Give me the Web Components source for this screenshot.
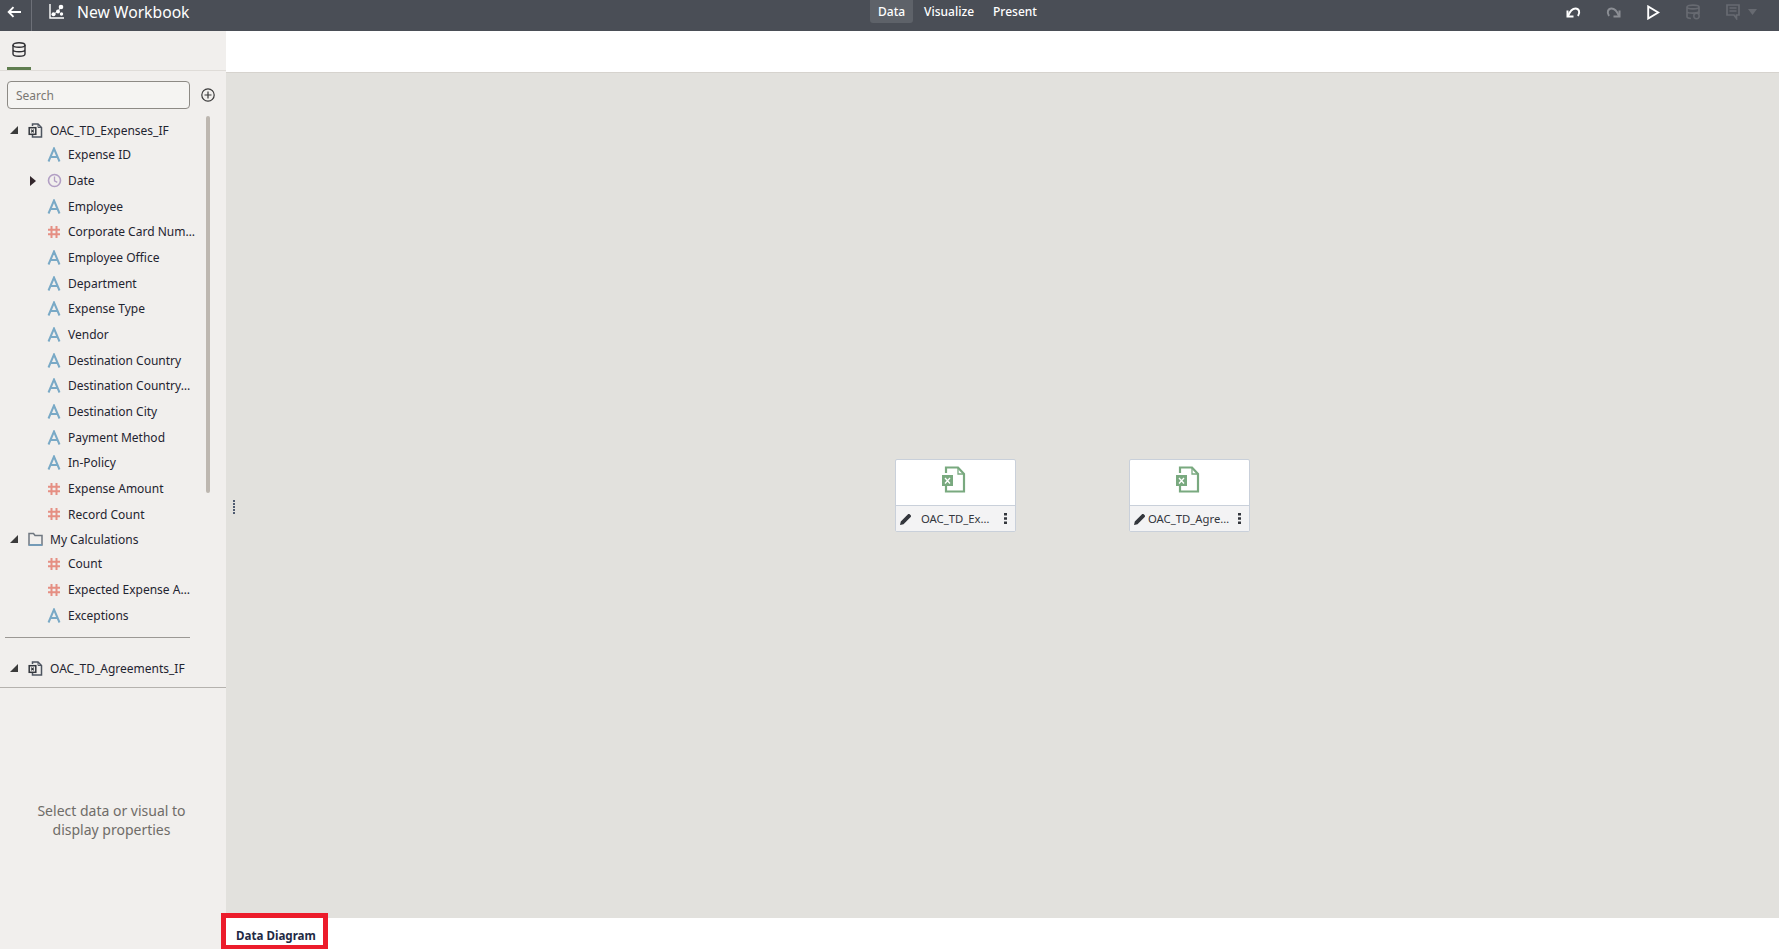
<!DOCTYPE html>
<html>
<head>
<meta charset="utf-8">
<title>New Workbook</title>
<style>
html, body { margin: 0; height: 100%; overflow: hidden; }
body { font-family: "Noto Sans", "Open Sans", sans-serif; color: #161513; }
</style>
</head>
<body>
<x-workbook>
	<x-topbar slot="top" title-text="New Workbook"></x-topbar>
	<x-sidebar slot="side">
		<x-tree-row kind="file" arrow="open" group>OAC_TD_Expenses_IF</x-tree-row>
		<x-tree-row kind="attr">Expense ID</x-tree-row>
		<x-tree-row kind="time" arrow="closed">Date</x-tree-row>
		<x-tree-row kind="attr">Employee</x-tree-row>
		<x-tree-row kind="num">Corporate Card Num…</x-tree-row>
		<x-tree-row kind="attr">Employee Office</x-tree-row>
		<x-tree-row kind="attr">Department</x-tree-row>
		<x-tree-row kind="attr">Expense Type</x-tree-row>
		<x-tree-row kind="attr">Vendor</x-tree-row>
		<x-tree-row kind="attr">Destination Country</x-tree-row>
		<x-tree-row kind="attr">Destination Country…</x-tree-row>
		<x-tree-row kind="attr">Destination City</x-tree-row>
		<x-tree-row kind="attr">Payment Method</x-tree-row>
		<x-tree-row kind="attr">In-Policy</x-tree-row>
		<x-tree-row kind="num">Expense Amount</x-tree-row>
		<x-tree-row kind="num">Record Count</x-tree-row>
		<x-tree-row kind="folder" arrow="open" group>My Calculations</x-tree-row>
		<x-tree-row kind="num">Count</x-tree-row>
		<x-tree-row kind="num">Expected Expense A…</x-tree-row>
		<x-tree-row kind="attr">Exceptions</x-tree-row>
		<x-tree-row slot="after" kind="file" arrow="open" group>OAC_TD_Agreements_IF</x-tree-row>
	</x-sidebar>
	<x-canvas slot="main">
		<x-node-card style="left:669px;top:386px" pad="9">OAC_TD_Ex…</x-node-card>
		<x-node-card style="left:903px;top:386px" pad="2">OAC_TD_Agre…</x-node-card>
	</x-canvas>
	<x-tabbar slot="bottom">Data Diagram</x-tabbar>
</x-workbook>

<script>
const ICONS = {
	attr: `<svg width="14" height="15" viewBox="0 0 14 15"><path d="M1.500 14.500 7 1.500l5.500 13M3.400 10h7.200" fill="none" stroke="#79a9c6" stroke-width="2"/></svg>`,
	num: `<svg width="14" height="14" viewBox="0 0 14 14"><path d="M4.500 1v12M9.500 1v12M1 4.700h12M1 9.300h12" fill="none" stroke="#e58f83" stroke-width="2"/></svg>`,
	time: `<svg width="15" height="15" viewBox="0 0 15 15"><circle cx="7.500" cy="7.500" r="6" fill="none" stroke="#b29fc4" stroke-width="1.600"/><path d="M7.500 3.600v4.200l2.800 1.600" fill="none" stroke="#b29fc4" stroke-width="1.300"/></svg>`,
	file: `<svg width="15" height="15" viewBox="0 0 15 15"><path d="M4.500 3V1h5.500l3.500 3.500V14h-9v-2" fill="none" stroke="#4e5560" stroke-width="1.500"/><path d="M10 1v3.500h3.500" fill="none" stroke="#4e5560" stroke-width="1"/><rect x="1.200" y="4.700" width="6.600" height="6.600" fill="#f1efed" stroke="#33373d" stroke-width="1.500"/><path d="M3.200 6.600l2.600 2.800M5.800 6.600 3.200 9.400" stroke="#33373d" stroke-width="1.100"/></svg>`,
	folder: `<svg width="15" height="14" viewBox="0 0 15 14"><path d="M1 13V1.500h4.500L7 3.500h7V13z" fill="none" stroke="#6f7780" stroke-width="1.500"/><path d="M1 13h13" stroke="#6b9ec0" stroke-width="1.500"/></svg>`
};

class XWorkbook extends HTMLElement {
	constructor() {
		super();
		this.attachShadow({ mode: 'open' }).innerHTML = `<style>
		:host { display: grid; width: 1779px; height: 949px; grid-template: 31px 1fr 31px / 226px 1fr; overflow: hidden; position: relative; }
		.top { grid-column: 1 / 3; display: block; }
		.side { grid-row: 2 / 4; display: block; min-height: 0; }
		.main, .bottom { display: block; min-height: 0; }
		</style>
		<div class="top"><slot name="top"></slot></div>
		<div class="side"><slot name="side"></slot></div>
		<div class="main"><slot name="main"></slot></div>
		<div class="bottom"><slot name="bottom"></slot></div>`;
	}
}

class XTopbar extends HTMLElement {
	constructor() {
		super();
		this.attachShadow({ mode: 'open' }).innerHTML = `<style>
		:host { display: grid; grid-template-columns: 870px auto 1fr; align-items: start; height: 31px; background: #4a4e56; color: #fff; }
		.left { display: flex; align-items: center; height: 24px; }
		.back { width: 32px; height: 31px; box-sizing: border-box; border-right: 1px solid #6d7078; display: flex; align-items: center; justify-content: center; padding: 0 4px 7px 0; align-self: flex-start; }
		.logo { margin-left: 17px; display: flex; margin-top: -1px; }
		h1 { margin: 0 0 0 13px; font: 400 15.700px "Noto Sans", sans-serif; line-height: 24px; }
		nav { display: flex; gap: 3px; height: 31px; }
		nav span { font-size: 12px; font-weight: 500; line-height: 23px; height: 23px; padding: 0 8px; border-radius: 0 0 3px 3px; }
		nav .on { background: #5e6269; }
		.right { display: flex; justify-content: flex-end; align-items: center; padding-right: 16px; height: 24px; }
		.right svg { display: block; }
		.act { width: 40px; display: flex; justify-content: center; }
		.act.menu { width: 54px; margin-right: -4px; justify-content: flex-start; padding-left: 12.500px; box-sizing: border-box; gap: 8px; align-items: center; }
		</style>
		<div class="left">
			<div class="back"><svg width="14" height="12" viewBox="0 0 14 12"><path d="M14 6H2M6.500 1.200 1.700 6l4.800 4.800" fill="none" stroke="#fff" stroke-width="1.900"/></svg></div>
			<div class="logo"><svg width="15" height="15" viewBox="0 0 15 15"><path d="M1 0v14h14" fill="none" stroke="#fff" stroke-width="1.400"/><path d="M4.500 10.500 9 7l3-4" fill="none" stroke="#fff" stroke-width="1"/><circle cx="4.500" cy="10.300" r="2" fill="#fff"/><circle cx="9" cy="7.500" r="2" fill="#fff"/><circle cx="12" cy="3" r="2.300" fill="#fff"/><circle cx="12.500" cy="10" r="1.700" fill="#fff"/></svg></div>
			<h1>${this.getAttribute('title-text')}</h1>
		</div>
		<nav><span class="on">Data</span><span>Visualize</span><span>Present</span></nav>
		<div class="right">
			<div class="act"><svg width="15" height="11" viewBox="0 0 15 11"><path d="M1.500 3.500v6h6" fill="none" stroke="#fff" stroke-width="2"/><path d="M2 9C4 4 6.500 1.500 9.500 1.500c3.500 0 5 4 2.500 7.500" fill="none" stroke="#fff" stroke-width="2"/></svg></div>
			<div class="act"><svg width="15" height="11" viewBox="0 0 15 11"><path d="M13.500 3.500v6h-6" fill="none" stroke="#8b8e94" stroke-width="2"/><path d="M13 9C11 4 8.500 1.500 5.500 1.500 2 1.500.5 5.500 3 9" fill="none" stroke="#8b8e94" stroke-width="2"/></svg></div>
			<div class="act"><svg width="13" height="15" viewBox="0 0 13 15"><path d="M1.200 1.500v12l10-6z" fill="none" stroke="#fff" stroke-width="1.900"/></svg></div>
			<div class="act"><svg width="15" height="16" viewBox="0 0 15 16"><path d="M1 3c0-2.600 12-2.600 12 0v7M5 14.500c-2.500-.2-4-.8-4-1.700V3M1 3c0 2.400 12 2.400 12 0M1 8c1.500 1.400 9 1.600 12 0" fill="none" stroke="#676a71" stroke-width="1.700"/><circle cx="10.500" cy="12" r="2.700" fill="none" stroke="#676a71" stroke-width="1.500"/></svg></div>
			<div class="act menu"><svg width="14" height="16" viewBox="0 0 14 16"><path d="M1 1h12v10h-2.500v3.500L8 11H1z" fill="none" stroke="#676a71" stroke-width="1.700"/><path d="M3.500 4h7M3.500 7h7" stroke="#676a71" stroke-width="1.400"/></svg><svg width="9" height="6" viewBox="0 0 9 6"><path d="M0 0h9L4.500 6z" fill="#676a71"/></svg></div>
		</div>`;
	}
}

class XSidebar extends HTMLElement {
	constructor() {
		super();
		this.attachShadow({ mode: 'open' }).innerHTML = `<style>
		:host { display: flex; flex-direction: column; height: 918px; background: #f1efed; position: relative; }
		.tabs { height: 40px; box-sizing: border-box; border-bottom: 1px solid #dfdcd8; padding: 0 7px; flex: none; }
		.tab { width: 24px; height: 39px; box-sizing: border-box; border-bottom: 3px solid #5f7d4f; display: flex; justify-content: center; padding-top: 11px; }
		.search { display: flex; align-items: center; padding: 10px 0 0 7px; gap: 10px; flex: none; }
		.field { width: 183px; height: 28px; box-sizing: border-box; border: 1px solid #8d8a85; border-radius: 4px; padding: 1px 8px 0; font-size: 12px; line-height: 26px; color: #7a7772; background: #f5f4f2; }
		.tree { padding: 9px 0 0 0; flex: none; }
		.rule { height: 1px; background: #9b9894; width: 185px; margin: 9px 0 18px 5px; }
		.after { height: 31.500px; box-sizing: border-box; border-bottom: 1px solid #b5b2ae; flex: none; }
		.props { flex: 1; display: flex; align-items: center; justify-content: center; text-align: center; font-size: 14px; line-height: 19px; color: #6f6c68; padding: 3px 3px 0 0; }
		.thumb { position: absolute; left: 206px; top: 85px; width: 4px; height: 377px; background: #bdb7b0; border-radius: 2px; }
		</style>
		<div class="tabs"><div class="tab"><svg width="14" height="15" viewBox="0 0 14 15"><g fill="none" stroke="#2f2f33" stroke-width="1.400"><ellipse cx="7" cy="3" rx="6" ry="2.300"/><path d="M1 3v9c0 1.300 2.700 2.300 6 2.300s6-1 6-2.300V3M1 7.500c0 1.300 2.700 2.300 6 2.300s6-1 6-2.300"/></g></svg></div></div>
		<div class="search">
			<div class="field">Search</div>
			<svg width="14" height="14" viewBox="0 0 14 14" style="margin-left:1px"><circle cx="7" cy="7" r="6.200" fill="none" stroke="#3a3a3a" stroke-width="1.200"/><path d="M7 3.500v7M3.500 7h7" stroke="#3a3a3a" stroke-width="1.200"/></svg>
		</div>
		<div class="tree"><slot></slot></div>
		<div class="rule"></div>
		<div class="after"><slot name="after"></slot></div>
		<div class="props"><div>Select data or visual to<br>display properties</div></div>
		<div class="thumb"></div>`;
	}
}

class XTreeRow extends HTMLElement {
	constructor() {
		super();
		const group = this.hasAttribute('group');
		const arrow = this.getAttribute('arrow');
		const arrowSvg = arrow === 'open'
			? `<svg width="8" height="8" viewBox="0 0 8 8"><path d="M8 0v8H0z" fill="#3b3b3b"/></svg>`
			: arrow === 'closed'
				? `<svg width="6" height="10" viewBox="0 0 6 10"><path d="M0 0l6 5-6 5z" fill="#33272c"/></svg>`
				: '';
		this.attachShadow({ mode: 'open' }).innerHTML = `<style>
		:host { display: flex; align-items: center; height: ${group ? 24 : 25.68}px; font-size: 12px; color: #1f2430; white-space: nowrap; }
		.arrow { flex: none; display: flex; align-items: center; justify-content: center; height: 100%; width: ${group ? 10 : 6}px; margin-left: ${group ? 9 : 30}px; }
		.icon { flex: none; display: flex; align-items: center; justify-content: center; width: 16px; margin-left: ${group ? 8 : 10}px; }
		.label { margin-left: ${group ? 7 : 6}px; }
		</style>
		<span class="arrow">${arrowSvg}</span>
		<span class="icon">${ICONS[this.getAttribute('kind')]}</span>
		<span class="label"><slot></slot></span>`;
	}
}

class XCanvas extends HTMLElement {
	constructor() {
		super();
		this.attachShadow({ mode: 'open' }).innerHTML = `<style>
		:host { display: flex; flex-direction: column; height: 887px; }
		.strip { height: 42px; flex: none; background: #fff; border-bottom: 1px solid #d6d3ce; box-sizing: border-box; }
		.area { flex: 1; background: #e2e1dd; position: relative; }
		.grip { position: absolute; left: 7px; top: 427px; width: 2px; height: 15px; background: repeating-linear-gradient(#4f5b70 0 2px, transparent 2px 3px); }
		</style>
		<div class="strip"></div>
		<div class="area"><div class="grip"></div><slot></slot></div>`;
	}
}

class XNodeCard extends HTMLElement {
	constructor() {
		super();
		const pad = this.getAttribute('pad');
		this.attachShadow({ mode: 'open' }).innerHTML = `<style>
		:host { position: absolute; display: flex; flex-direction: column; width: 121px; height: 73px; box-sizing: border-box; border: 1px solid #c9d0da; border-radius: 2px; background: #fff; overflow: hidden; }
		.top { height: 46px; box-sizing: border-box; flex: none; display: flex; align-items: center; justify-content: center; padding: 0 5px 6px 0; border-bottom: 1px solid #c9d0da; }
		.foot { flex: 1; background: #f3f3f4; display: flex; align-items: center; padding: 0 8px 0 4px; font-size: 11.300px; color: #33363c; }
		.name { margin-left: ${pad}px; flex: 1; min-width: 0; white-space: nowrap; }
		.foot svg { flex: none; }
		</style>
		<div class="top"><svg width="25" height="27" viewBox="0 0 25 27"><path d="M5 7V1.500h12l6 6.500v17.500H5V20" fill="#fff" stroke="#79a97f" stroke-width="2.200"/><path d="M17 1.500V8h6" fill="none" stroke="#79a97f" stroke-width="1.300"/><rect x="1" y="9" width="11" height="11" fill="#79a97f"/><path d="M4 12l5 5.500M9 12l-5 5.500" stroke="#fff" stroke-width="1.300"/></svg></div>
		<div class="foot">
			<svg width="12" height="12" viewBox="0 0 12 12"><path d="M0 12l.8-3.500L8 1.300c.5-.5 1.200-.5 1.700 0l1 1c.5.500.5 1.200 0 1.700L3.500 11.200z" fill="#33363c"/></svg>
			<span class="name"><slot></slot></span>
			<svg width="3" height="11" viewBox="0 0 3 11"><path d="M0 0h3v2.500H0zM0 4.200h3v2.500H0zM0 8.500h3V11H0z" fill="#33363c"/></svg>
		</div>`;
	}
}

class XTabbar extends HTMLElement {
	constructor() {
		super();
		this.attachShadow({ mode: 'open' }).innerHTML = `<style>
		:host { display: block; height: 31px; background: #fff; position: relative; }
		.tab { display: block; padding: 10px 0 0 10px; font-size: 11.600px; font-weight: 700; color: #1f2a44; line-height: 16px; }
		.mark { position: absolute; left: -5px; top: -5px; width: 107px; height: 36px; box-sizing: border-box; border: 5px solid #ec1c2b; border-bottom-width: 4px; pointer-events: none; }
		</style>
		<span class="tab"><slot></slot></span>
		<div class="mark"></div>`;
	}
}

customElements.define('x-workbook', XWorkbook);
customElements.define('x-topbar', XTopbar);
customElements.define('x-sidebar', XSidebar);
customElements.define('x-tree-row', XTreeRow);
customElements.define('x-canvas', XCanvas);
customElements.define('x-node-card', XNodeCard);
customElements.define('x-tabbar', XTabbar);
</script>
</body>
</html>
